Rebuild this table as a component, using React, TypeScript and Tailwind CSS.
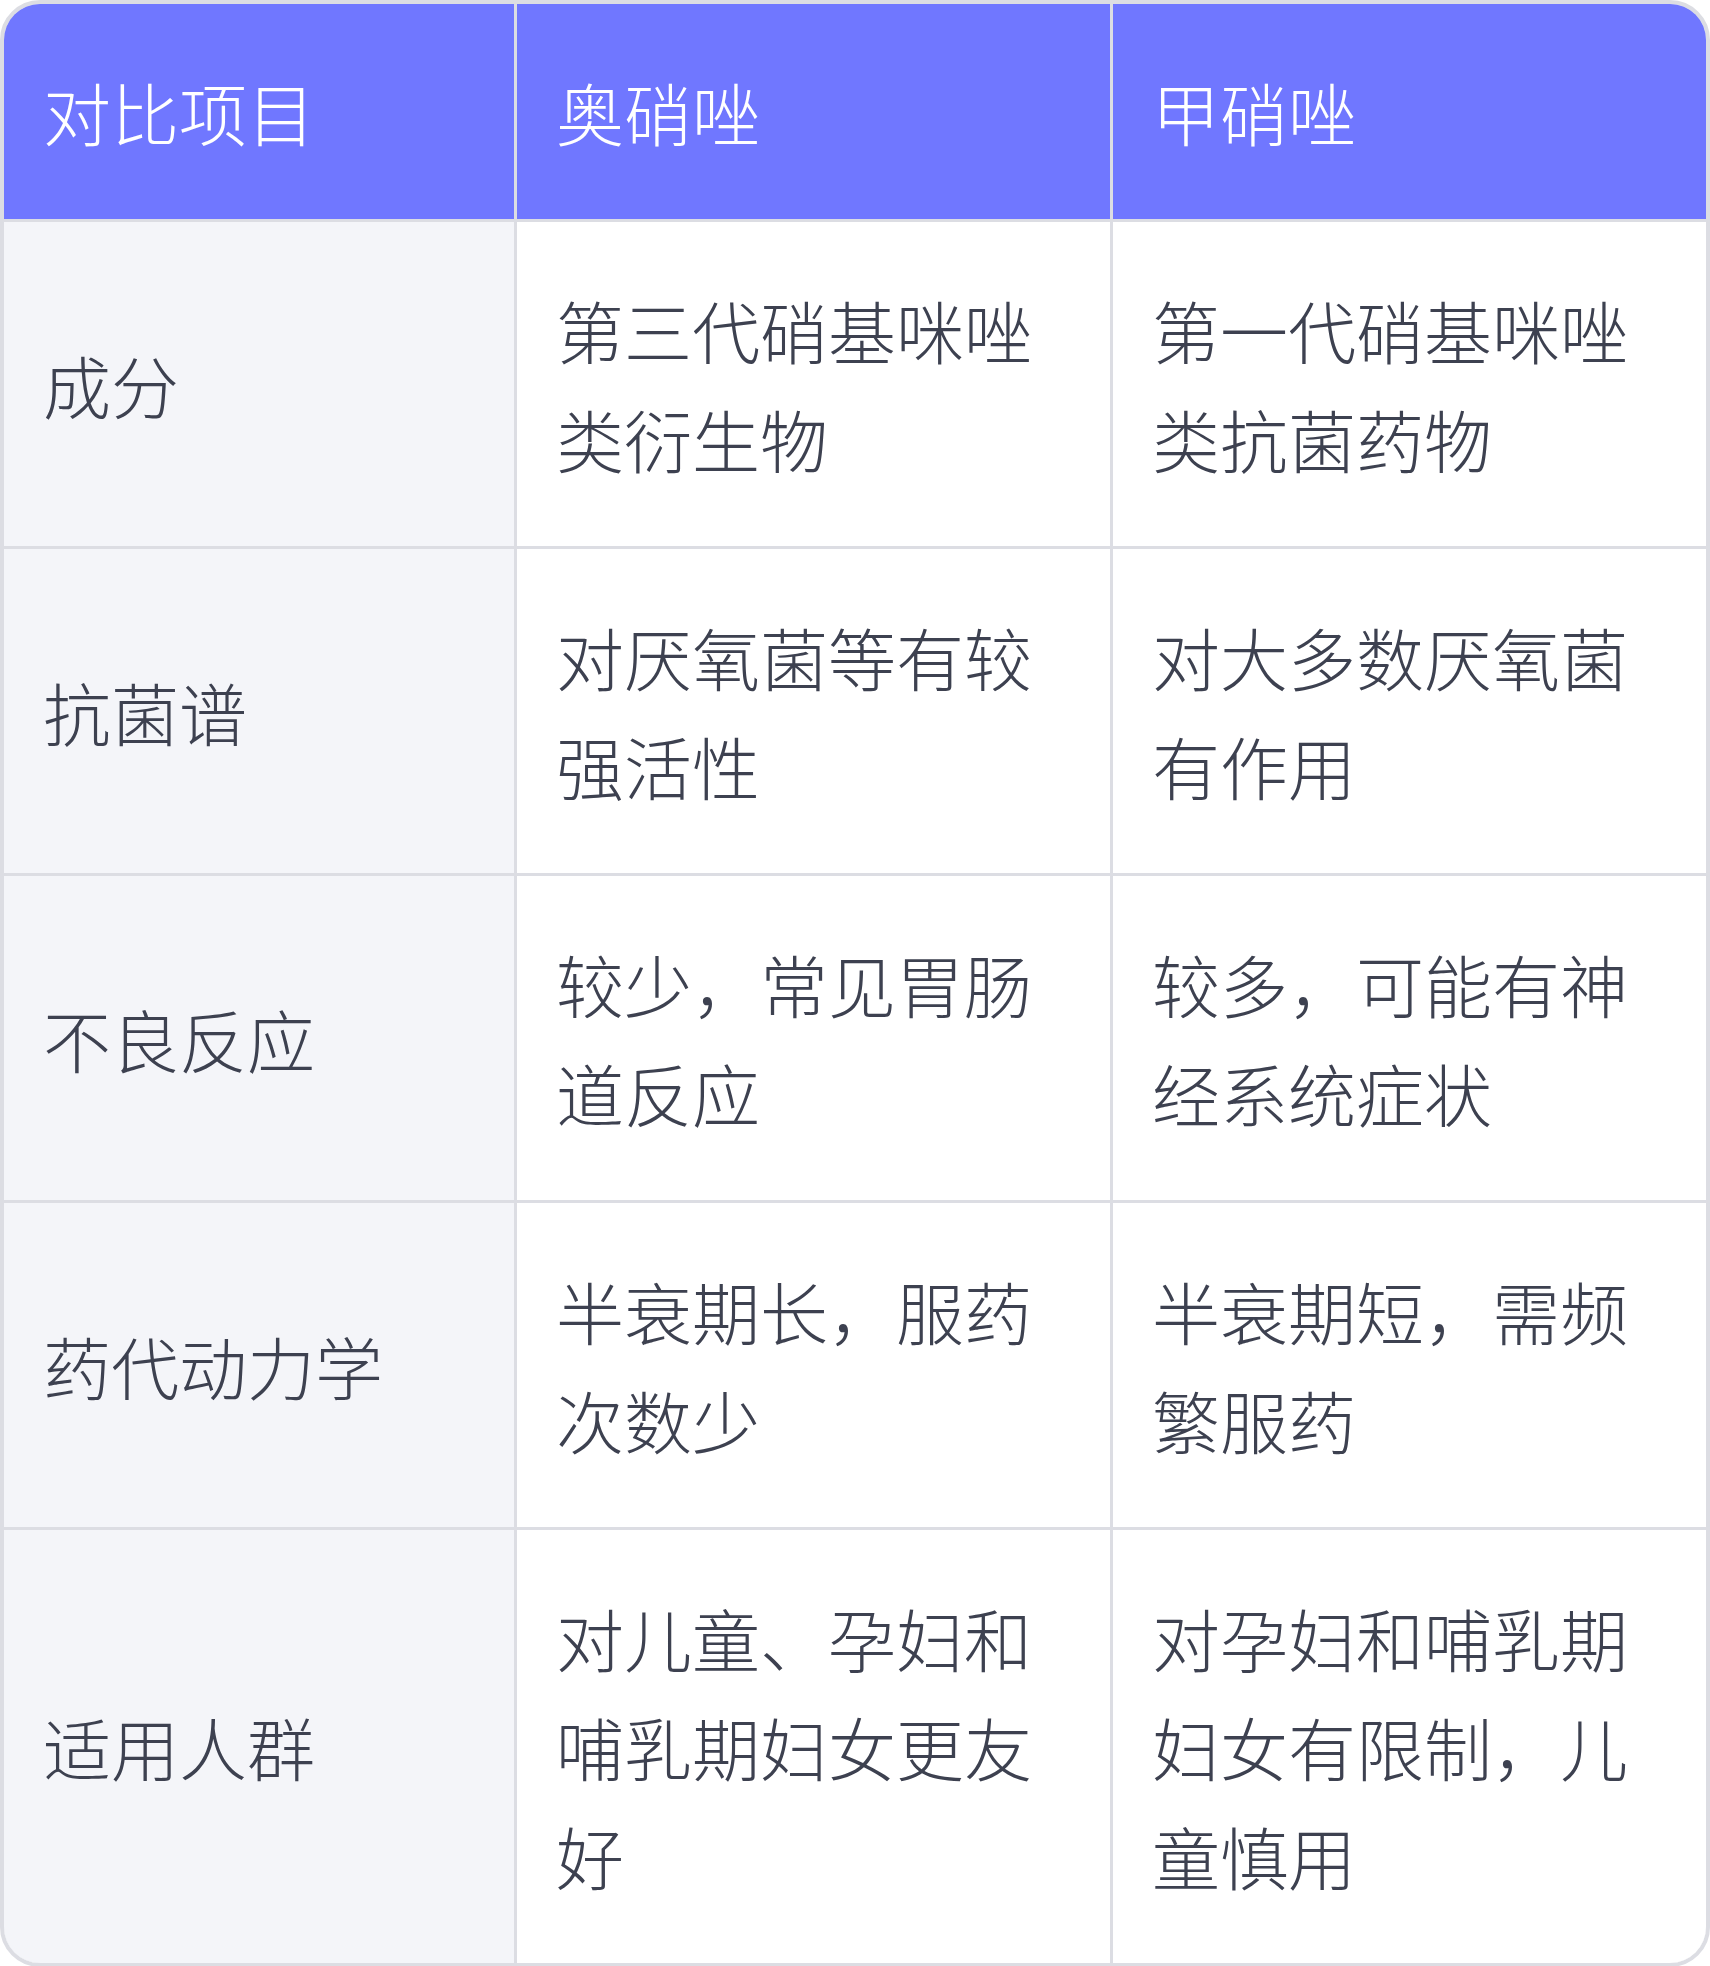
import React from "react";

type Row = {
  item: string;
  ornidazole: string;
  metronidazole: string;
};

const rows: Row[] = [
  { item: "成分", ornidazole: "第三代硝基咪唑类衍生物", metronidazole: "第一代硝基咪唑类抗菌药物" },
  { item: "抗菌谱", ornidazole: "对厌氧菌等有较强活性", metronidazole: "对大多数厌氧菌有作用" },
  { item: "不良反应", ornidazole: "较少，常见胃肠道反应", metronidazole: "较多，可能有神经系统症状" },
  { item: "药代动力学", ornidazole: "半衰期长，服药次数少", metronidazole: "半衰期短，需频繁服药" },
  {
    item: "适用人群",
    ornidazole: "对儿童、孕妇和哺乳期妇女更友好",
    metronidazole: "对孕妇和哺乳期妇女有限制，儿童慎用",
  },
];

const font = {
  fontFamily: '"Noto Sans CJK SC", "Noto Sans", sans-serif',
};

const Cell = ({ children, head, first }: { children: React.ReactNode; head?: boolean; first?: boolean }) => (
  <div
    className={`flex items-center px-[39px] py-[53px] text-[68px] leading-[109px] font-extralight ${
      head ? "bg-[#7077ff] text-white" : first ? "bg-[#f4f5f9] text-[#3d4150]" : "bg-white text-[#3d4150]"
    }`}
  >
    <span>{children}</span>
  </div>
);

export default function App() {
  return (
    <div className="w-[1710px] bg-white" style={font}>
      <div className="border-4 border-[#dcdde3] rounded-[40px] overflow-hidden">
        <div className="grid grid-cols-[510px_1fr_1fr] gap-[3px] bg-[#dcdde3]">
          <Cell head>对比项目</Cell>
          <Cell head>奥硝唑</Cell>
          <Cell head>甲硝唑</Cell>
          {rows.map((r) => (
            <React.Fragment key={r.item}>
              <Cell first>{r.item}</Cell>
              <Cell>{r.ornidazole}</Cell>
              <Cell>{r.metronidazole}</Cell>
            </React.Fragment>
          ))}
        </div>
      </div>
    </div>
  );
}
